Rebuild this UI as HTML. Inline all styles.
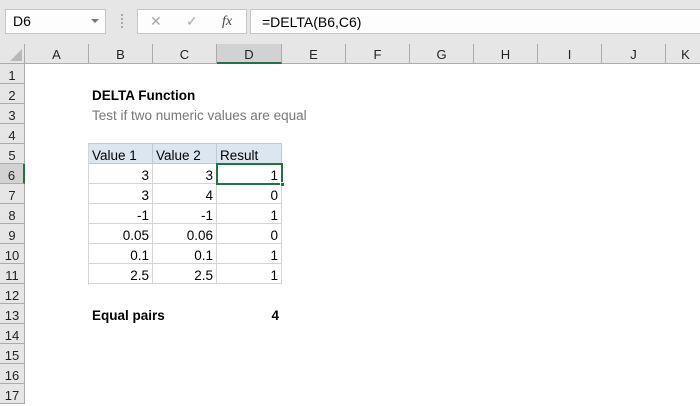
<!DOCTYPE html>
<html><head><style>
body{margin:0;width:700px;height:400px;overflow:hidden;background:#fff;font-family:"Liberation Sans",Calibri,sans-serif;position:relative}
div{position:absolute;box-sizing:border-box}
.top{left:0;top:0;width:700px;height:44px;background:#e6e6e6}
.box{background:#fdfdfd;border:1px solid #c6c6c6;font-size:14px;line-height:23px}
.ch{top:44px;height:20px;background:#e6e6e6;border-right:1px solid #ababab;border-bottom:1px solid #ababab;text-align:center;font-size:13px;line-height:20px;padding-top:1px;color:#222}
.rh{left:0;width:25px;height:20px;background:#e6e6e6;border-right:1px solid #ababab;border-bottom:1px solid #ababab;text-align:center;font-size:13px;line-height:20px;padding-top:2px;color:#222}
.c{height:20px;border-right:1px solid #d4d4d4;border-bottom:1px solid #d4d4d4;font-size:13.5px;line-height:20px;padding:2px 3px 0;text-align:right;color:#000}
.h{background:#dce6f1;text-align:left;border-color:#c0c8d4}
.t{font-size:13.5px;line-height:20px;padding-top:2px;height:20px}
</style></head><body>
<div class="top"></div>
<div class="box" style="left:5px;top:9px;width:101px;height:25px;padding-left:7px">D6</div>
<div style="left:91px;top:19px;width:0;height:0;border-left:4px solid transparent;border-right:4px solid transparent;border-top:4px solid #777"></div>
<div style="left:121px;top:14px;width:2px;height:14px;border-left:2px dotted #aaa"></div>
<div class="box" style="left:137px;top:9px;width:110px;height:25px;color:#aaa">
<span style="position:absolute;left:12px;top:0">✕</span><span style="position:absolute;left:48px;top:0">✓</span><span style="position:absolute;left:84px;top:0;color:#444;font-style:italic;font-family:'Liberation Serif',serif">fx</span></div>
<div class="box" style="left:250px;top:9px;width:460px;height:25px;padding-left:11px;padding-top:1px">=DELTA(B6,C6)</div>
<div class="ch" style="left:0;width:25px"><div style="right:2px;bottom:2px;width:0;height:0;border-left:12px solid transparent;border-bottom:12px solid #b8b8b8"></div></div>
<div class="ch" style="left:25px;width:64px">A</div>
<div class="ch" style="left:89px;width:64px">B</div>
<div class="ch" style="left:153px;width:64px">C</div>
<div class="ch" style="left:217px;width:65px;background:#d2d2d2;border-bottom:2px solid #217346">D</div>
<div class="ch" style="left:282px;width:64px">E</div>
<div class="ch" style="left:346px;width:64px">F</div>
<div class="ch" style="left:410px;width:64px">G</div>
<div class="ch" style="left:474px;width:64px">H</div>
<div class="ch" style="left:538px;width:64px">I</div>
<div class="ch" style="left:602px;width:64px">J</div>
<div class="ch" style="left:666px;width:40px">K</div>
<div class="rh" style="top:64px">1</div><div class="rh" style="top:84px">2</div><div class="rh" style="top:104px">3</div><div class="rh" style="top:124px">4</div><div class="rh" style="top:144px">5</div>
<div class="rh" style="top:164px;background:#d2d2d2;border-right:2px solid #217346">6</div>
<div class="rh" style="top:184px">7</div><div class="rh" style="top:204px">8</div><div class="rh" style="top:224px">9</div><div class="rh" style="top:244px">10</div><div class="rh" style="top:264px">11</div><div class="rh" style="top:284px">12</div><div class="rh" style="top:304px">13</div><div class="rh" style="top:324px">14</div><div class="rh" style="top:344px">15</div><div class="rh" style="top:364px">16</div><div class="rh" style="top:384px">17</div>
<div class="t" style="left:92px;top:84px;font-weight:bold">DELTA Function</div>
<div class="t" style="left:92px;top:104px;color:#777">Test if two numeric values are equal</div>
<div style="left:88px;top:143px;width:194px;height:142px;border-top:1px solid #c0c8d4;border-left:1px solid #d4d4d4"></div>
<div class="c h" style="left:89px;top:144px;width:64px">Value 1</div><div class="c h" style="left:153px;top:144px;width:64px">Value 2</div><div class="c h" style="left:217px;top:144px;width:65px">Result</div>
<div class="c" style="left:89px;top:164px;width:64px">3</div><div class="c" style="left:153px;top:164px;width:64px">3</div><div class="c" style="left:217px;top:164px;width:65px">1</div>
<div class="c" style="left:89px;top:184px;width:64px">3</div><div class="c" style="left:153px;top:184px;width:64px">4</div><div class="c" style="left:217px;top:184px;width:65px">0</div>
<div class="c" style="left:89px;top:204px;width:64px">-1</div><div class="c" style="left:153px;top:204px;width:64px">-1</div><div class="c" style="left:217px;top:204px;width:65px">1</div>
<div class="c" style="left:89px;top:224px;width:64px">0.05</div><div class="c" style="left:153px;top:224px;width:64px">0.06</div><div class="c" style="left:217px;top:224px;width:65px">0</div>
<div class="c" style="left:89px;top:244px;width:64px">0.1</div><div class="c" style="left:153px;top:244px;width:64px">0.1</div><div class="c" style="left:217px;top:244px;width:65px">1</div>
<div class="c" style="left:89px;top:264px;width:64px">2.5</div><div class="c" style="left:153px;top:264px;width:64px">2.5</div><div class="c" style="left:217px;top:264px;width:65px">1</div>
<div style="left:216px;top:163px;width:67px;height:22px;border:2px solid #217346"></div>
<div style="left:280px;top:182px;width:5px;height:5px;background:#217346;border:1px solid #fff"></div>
<div class="t" style="left:92px;top:304px;font-weight:bold">Equal pairs</div>
<div class="t" style="left:217px;top:304px;width:62px;text-align:right;font-weight:bold">4</div>
</body></html>
